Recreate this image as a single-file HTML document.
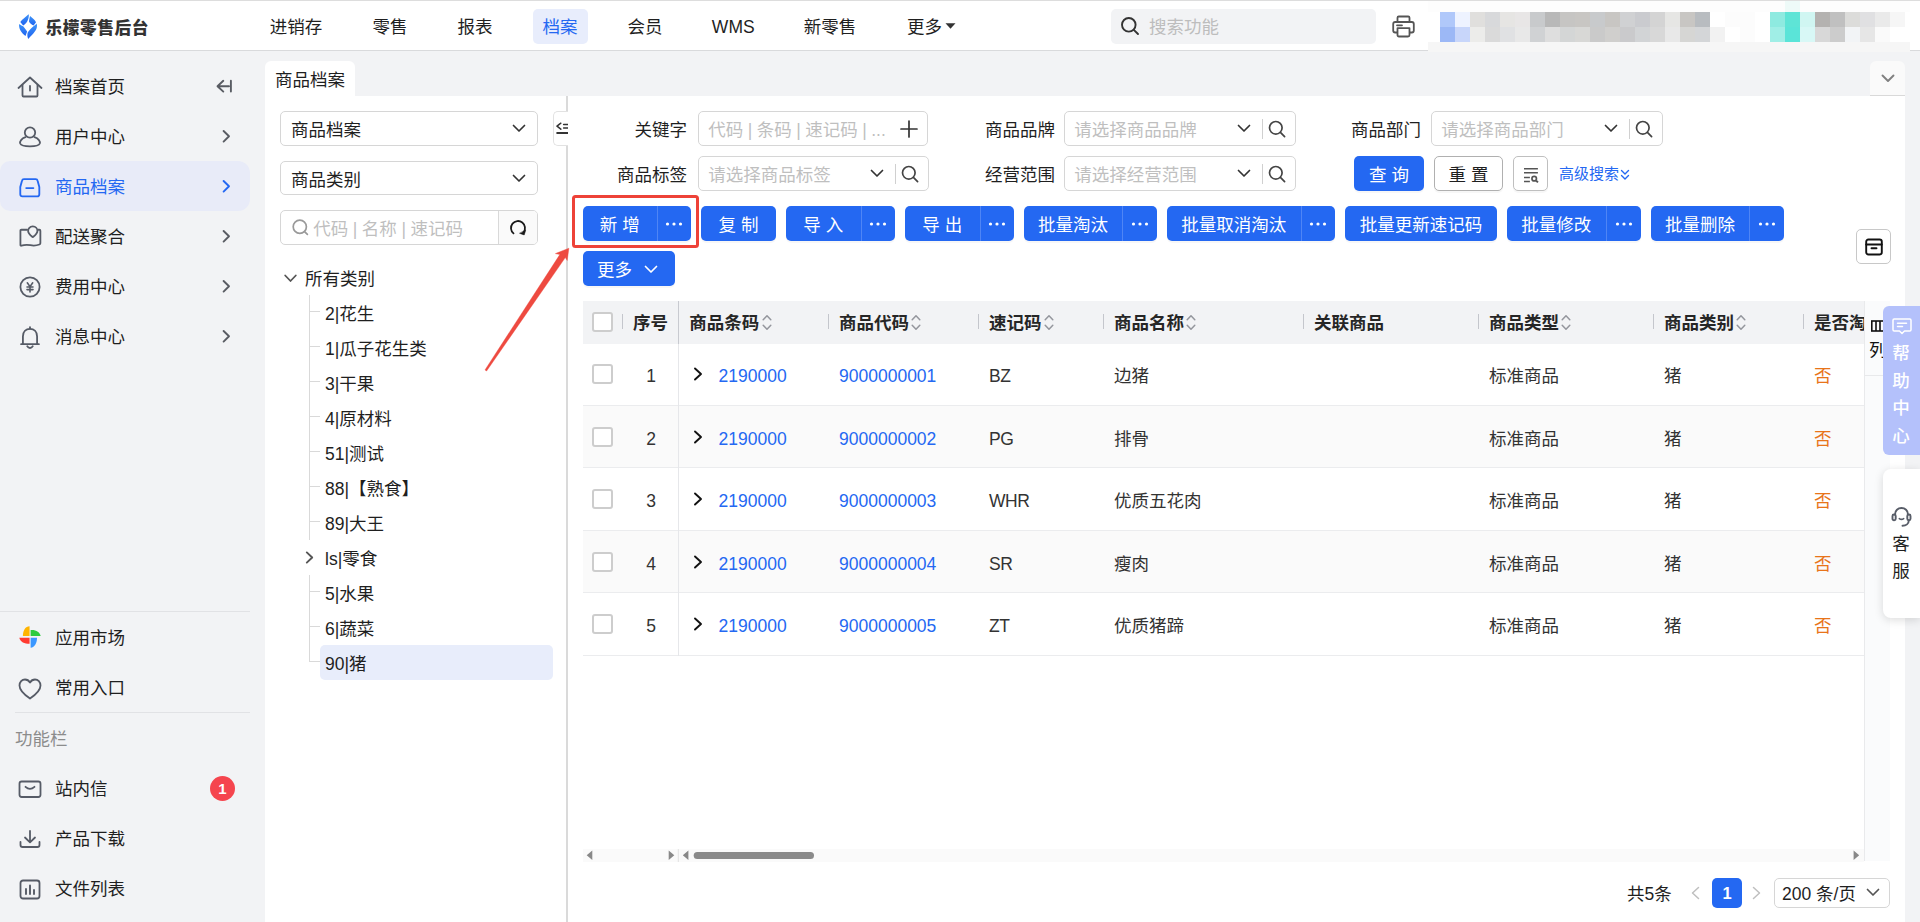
<!DOCTYPE html>
<html lang="zh-CN">
<head>
<meta charset="utf-8">
<title>乐檬零售后台 - 商品档案</title>
<style>
*{box-sizing:border-box;margin:0;padding:0}
html,body{width:1920px;height:922px;overflow:hidden}
body{position:relative;background:#f2f3f5;font-family:"Liberation Sans","Noto Sans CJK SC",sans-serif;font-size:17.5px;color:#1f1f1f;line-height:1}
svg{display:block;position:absolute;overflow:visible}
header,aside,main{display:block;position:static}
div,span,a{position:absolute;white-space:nowrap}
/* header */
#header{left:0;top:0;width:1920px;height:51px;background:#fff;border-top:1px solid #dddddd;border-bottom:1px solid #d9dadc}
#logo-text{left:45.5px;top:16px;height:20px;line-height:25.5px;font-size:16.7px;font-weight:900;color:#333;letter-spacing:0.55px}
.nav{top:9px;height:35px;line-height:37px;color:#1f1f1f;text-align:center}
.nav.on{background:#e8edfc;color:#2468f2;border-radius:5px}
#gsearch{left:1111px;top:9px;width:265px;height:35px;background:#f2f3f5;border-radius:5px}
#gsearch span{left:38px;top:0;line-height:36.5px;color:#bdbdbd}
.mz{width:15px;height:15px}
/* sidebar */
.mi{left:0;width:250px;height:50px;line-height:53px}
.mi .t{left:55px;top:0;color:#1f1f1f}
.mi.on{background:#e8ebf8;border-radius:10px 12px 12px 10px}
.mi.on .t{color:#2468f2}
.hr{height:1px;background:#e1e2e5}
/* main */
#tab{left:265px;top:61px;width:90px;height:36px;background:#fff;border-radius:6px 6px 0 0;line-height:39.5px;text-align:center}
#panel{left:265px;top:96px;width:1640px;height:826px;background:#fff}
.sel{height:34.5px;border:1px solid #d6d6d6;border-radius:5px;background:#fff;line-height:36.5px}
.sel .v{left:10px;top:0;color:#1f1f1f}
.sel .ph{left:9.3px;top:0;color:#bfbfbf}
.lbl{height:35px;line-height:39px;text-align:right;color:#1f1f1f}
.btn{height:35px;line-height:39px;background:#2468f2;color:#fff;border-radius:5px;text-align:center;box-shadow:0 2px 0 rgba(0,0,0,.03)}
.btn i{top:0;height:35px;width:1px;background:#4f85f5;position:absolute}
.btn b{top:0;left:0;height:35px;font-weight:400;text-align:center;position:absolute}
.tn{left:325px;height:35px;line-height:37px;color:#1f1f1f}
#thead{left:583px;top:301px;width:1281px;height:43px;background:#f2f3f5}
.th{top:301px;height:43px;line-height:44.5px;font-weight:700;color:#262626}
.tick{top:314px;width:1px;height:15px;background:#c4c6cc}
.row{left:583px;width:1281px;border-bottom:1px solid #ebecee;background:#fff}
.row.alt{background:#fafafa}
.td{color:#333;height:24px;line-height:28px}
.lk{color:#2468f2}
.cb{left:592px;width:20.6px;height:20px;border:2px solid #cdcdcd;border-radius:3px;background:#fff}
</style>
</head>
<body>
<!-- HEADER -->
<header>
<div id="header"></div>
<svg style="left:12px;top:8px" width="40" height="36" viewBox="0 0 1024 922">
<defs><linearGradient id="lg" x1="0" y1="0" x2="0" y2="1"><stop offset="0" stop-color="#3d93f8"/><stop offset="1" stop-color="#1f63f0"/></linearGradient></defs>
<path d="M425 158 C350 230 260 290 212 358 L285 447 C370 400 430 310 432 180 Z" fill="url(#lg)"/>
<path d="M462 208 C520 260 590 310 615 368 L552 450 C500 420 455 385 435 345 C440 290 455 240 462 208 Z" fill="url(#lg)"/>
<path d="M182 410 C165 520 240 640 345 718 C360 680 375 640 388 600 C350 550 310 500 285 468 C240 450 200 425 182 410 Z" fill="url(#lg)"/>
<path d="M632 400 C680 560 520 680 415 792 C385 720 390 660 405 620 C450 560 510 500 560 462 C590 440 615 420 632 400 Z" fill="url(#lg)"/>
</svg>
<div id="logo-text">乐檬零售后台</div>
<div class="nav" style="left:260px;width:72px">进销存</div>
<div class="nav" style="left:362.5px;width:55px">零售</div>
<div class="nav" style="left:447.5px;width:55px">报表</div>
<div class="nav on" style="left:532.5px;width:55px">档案</div>
<div class="nav" style="left:617.5px;width:55px">会员</div>
<div class="nav" style="left:702.5px;width:61.5px">WMS</div>
<div class="nav" style="left:794px;width:72px">新零售</div>
<div class="nav" style="left:897px;width:55px">更多</div>
<svg style="left:944.5px;top:23px" width="11" height="6" viewBox="0 0 11 6"><path d="M0.5 0.3 H10.5 L5.5 5.7 Z" fill="#333"/></svg>
<div id="gsearch"><svg style="left:9px;top:7px" width="20" height="20" viewBox="0 0 20 20"><circle cx="8.8" cy="8.8" r="6.8" fill="none" stroke="#333" stroke-width="1.9"/><path d="M13.8 13.8 L18 18" stroke="#333" stroke-width="1.9" stroke-linecap="round"/></svg><span>搜索功能</span></div>
<svg style="left:1392px;top:15px" width="23" height="23" viewBox="0 0 23 23" fill="none" stroke="#555" stroke-width="1.8" stroke-linejoin="round">
<path d="M5.5 7 V2.8 Q5.5 1.5 6.8 1.5 H16.2 Q17.5 1.5 17.5 2.8 V7"/>
<path d="M5.5 17.5 H3.2 Q1.2 17.5 1.2 15.5 V9 Q1.2 7 3.2 7 H19.8 Q21.8 7 21.8 9 V15.5 Q21.8 17.5 19.8 17.5 H17.5"/>
<path d="M5.5 13.2 H17.5 V20 Q17.5 21.5 16 21.5 H7 Q5.5 21.5 5.5 20 Z"/>
<path d="M5 10.3 H10" stroke-linecap="round"/>
</svg>
<div style="left:1428px;top:1px;width:482px;height:51px;background:#fdfdfd"></div>
<div class="mz" style="left:1785px;top:1px;height:11px;background:#eefaf8"></div>
<div style="left:1428px;top:12px;width:482px;height:30px;background:#fff"></div>
<div style="left:1428px;top:42px;width:482px;height:10px;background:#f6f6f6"></div>
<div class="mz" style="left:1440px;top:12px;background:#b0c8fa"></div><div class="mz" style="left:1440px;top:27px;background:#9cb8f6"></div><div class="mz" style="left:1455px;top:12px;background:#eef3ff"></div><div class="mz" style="left:1455px;top:27px;background:#c8d6fa"></div><div class="mz" style="left:1470px;top:12px;background:#e0dfdd"></div><div class="mz" style="left:1470px;top:27px;background:#ececea"></div><div class="mz" style="left:1485px;top:12px;background:#d8d9db"></div><div class="mz" style="left:1485px;top:27px;background:#dadada"></div><div class="mz" style="left:1500px;top:12px;background:#e6e5e3"></div><div class="mz" style="left:1500px;top:27px;background:#e0e1e3"></div><div class="mz" style="left:1515px;top:12px;background:#e8e6e6"></div><div class="mz" style="left:1515px;top:27px;background:#e8e8e8"></div><div class="mz" style="left:1530px;top:12px;background:#c8cacc"></div><div class="mz" style="left:1530px;top:27px;background:#d0d2d4"></div><div class="mz" style="left:1545px;top:12px;background:#b8b8b8"></div><div class="mz" style="left:1545px;top:27px;background:#dedede"></div><div class="mz" style="left:1560px;top:12px;background:#c6c5c3"></div><div class="mz" style="left:1560px;top:27px;background:#d4d6d6"></div><div class="mz" style="left:1575px;top:12px;background:#c8c6c3"></div><div class="mz" style="left:1575px;top:27px;background:#d8d8d6"></div><div class="mz" style="left:1590px;top:12px;background:#c8cacc"></div><div class="mz" style="left:1590px;top:27px;background:#cacaca"></div><div class="mz" style="left:1605px;top:12px;background:#c8c6c3"></div><div class="mz" style="left:1605px;top:27px;background:#d0cfcd"></div><div class="mz" style="left:1620px;top:12px;background:#d0d1d3"></div><div class="mz" style="left:1620px;top:27px;background:#cacacc"></div><div class="mz" style="left:1635px;top:12px;background:#cacbcf"></div><div class="mz" style="left:1635px;top:27px;background:#d2d4d6"></div><div class="mz" style="left:1650px;top:12px;background:#d4d4d4"></div><div class="mz" style="left:1650px;top:27px;background:#d8d8d8"></div><div class="mz" style="left:1665px;top:12px;background:#e6e6e4"></div><div class="mz" style="left:1665px;top:27px;background:#e8e8e8"></div><div class="mz" style="left:1680px;top:12px;background:#c8c6c3"></div><div class="mz" style="left:1680px;top:27px;background:#d6d6d4"></div><div class="mz" style="left:1695px;top:12px;background:#b8bcc0"></div><div class="mz" style="left:1695px;top:27px;background:#d4d6d8"></div><div class="mz" style="left:1710px;top:27px;background:#f2f2f2"></div><div class="mz" style="left:1725px;top:12px;background:#fcfcfc"></div><div class="mz" style="left:1740px;top:12px;background:#fcfcfc"></div><div class="mz" style="left:1740px;top:27px;background:#fcfcfc"></div><div class="mz" style="left:1770px;top:12px;background:#8eeae0"></div><div class="mz" style="left:1770px;top:27px;background:#a0eee6"></div><div class="mz" style="left:1785px;top:12px;background:#5ee4d6"></div><div class="mz" style="left:1785px;top:27px;background:#5ae4d8"></div><div class="mz" style="left:1800px;top:12px;background:#d0f6f2"></div><div class="mz" style="left:1800px;top:27px;background:#d8f8f6"></div><div class="mz" style="left:1815px;top:12px;background:#b4b2b0"></div><div class="mz" style="left:1815px;top:27px;background:#d8d8d8"></div><div class="mz" style="left:1830px;top:12px;background:#c0c0c0"></div><div class="mz" style="left:1830px;top:27px;background:#cccccc"></div><div class="mz" style="left:1845px;top:12px;background:#dcdcda"></div><div class="mz" style="left:1845px;top:27px;background:#f2f4f6"></div><div class="mz" style="left:1860px;top:12px;background:#e0e0e2"></div><div class="mz" style="left:1860px;top:27px;background:#e6e6e6"></div><div class="mz" style="left:1875px;top:12px;background:#eaeaea"></div><div class="mz" style="left:1875px;top:27px;background:#fafafa"></div><div class="mz" style="left:1890px;top:12px;background:#f6f6f6"></div>
</header>
<!-- SIDEBAR -->
<aside>
<div class="mi" style="top:61px"><svg style="left:17px;top:15.3px" width="26" height="24" viewBox="0 0 26 24" fill="none" stroke="#565b66" stroke-width="1.8" stroke-linecap="round" stroke-linejoin="round"><path d="M1.5 12 L13 1.5 L24.5 12"/><path d="M5.5 9 V19.5 Q5.5 20.5 6.5 20.5 H19.5 Q20.5 20.5 20.5 19.5 V9"/><path d="M13 10 V14.5"/></svg><span class="t">档案首页</span><svg style="left:216px;top:17px" width="18" height="16" viewBox="0 0 18 16" fill="none" stroke="#595c63" stroke-width="1.9" stroke-linecap="round" stroke-linejoin="round"><path d="M7.3 2.8 L1.5 8.2 L7.3 13.6 M2 8.2 H13 M14.9 2.8 V13.6"/></svg></div>
<div class="mi" style="top:111px"><svg style="left:18px;top:13.5px" width="24" height="24" viewBox="0 0 24 24" fill="none" stroke="#565b66" stroke-width="1.8" stroke-linecap="round" stroke-linejoin="round"><circle cx="12" cy="7.5" r="5.2"/><path d="M7.5 12.2 C3.5 13.5 1.5 16.5 2.2 18.5 C3 20.5 7 21.3 12 21.3 C17 21.3 21 20.5 21.8 18.5 C22.5 16.5 20.5 13.5 16.5 12.2"/></svg><span class="t">用户中心</span><svg style="left:221px;top:18px" width="10" height="15" viewBox="0 0 10 15" fill="none" stroke="#595c63" stroke-width="1.9" stroke-linecap="round" stroke-linejoin="round"><path d="M2.6 2 L8 7.3 L2.6 12.6"/></svg></div>
<div class="mi on" style="top:161px"><svg style="left:19.2px;top:16.5px" width="21.6" height="19.4" viewBox="0 0 24 21.6" fill="none" stroke="#2468f2" stroke-width="2.05" stroke-linecap="round" stroke-linejoin="round"><path d="M5.5 1.2 H18.5 Q20.3 1.2 20.7 3 L22.6 10 V18 Q22.6 20.4 20.2 20.4 H3.8 Q1.4 20.4 1.4 18 V10 L3.3 3 Q3.7 1.2 5.5 1.2 Z"/><path d="M8 11.2 H16"/></svg><span class="t">商品档案</span><svg style="left:221px;top:18px" width="10" height="15" viewBox="0 0 10 15" fill="none" stroke="#2468f2" stroke-width="1.9" stroke-linecap="round" stroke-linejoin="round"><path d="M2.6 2 L8 7.3 L2.6 12.6"/></svg></div>
<div class="mi" style="top:211px"><svg style="left:18.7px;top:14.1px" width="22.8" height="22.8" viewBox="0 0 24 24" fill="none" stroke="#565b66" stroke-width="1.9" stroke-linecap="round" stroke-linejoin="round"><path d="M8.5 5 H2.5 Q1.5 5 1.5 6 V21 Q1.5 22 2.5 21.8 Q7 20.3 12 21.3 Q17 22.3 21.5 20.5 Q22.5 20.2 22.5 19.2 V6 Q22.5 5 21.5 5 H20"/><path d="M14.5 1.5 C17.6 1.5 19.4 3.7 19.4 6.2 C19.4 9 16.4 11.2 14.5 12.8 C12.6 11.2 9.6 9 9.6 6.2 C9.6 3.7 11.4 1.5 14.5 1.5 Z"/></svg><span class="t">配送聚合</span><svg style="left:221px;top:18px" width="10" height="15" viewBox="0 0 10 15" fill="none" stroke="#595c63" stroke-width="1.9" stroke-linecap="round" stroke-linejoin="round"><path d="M2.6 2 L8 7.3 L2.6 12.6"/></svg></div>
<div class="mi" style="top:261px"><svg style="left:18px;top:13.8px" width="24" height="24" viewBox="0 0 24 24" fill="none" stroke="#565b66" stroke-width="1.8" stroke-linecap="round" stroke-linejoin="round"><circle cx="12" cy="12" r="9.6"/><path d="M9.3 7.8 L12 11.6 L14.7 7.8 M9 12 H15 M9 14.6 H15 M12 11.6 V17" stroke-width="1.6"/></svg><span class="t">费用中心</span><svg style="left:221px;top:18px" width="10" height="15" viewBox="0 0 10 15" fill="none" stroke="#595c63" stroke-width="1.9" stroke-linecap="round" stroke-linejoin="round"><path d="M2.6 2 L8 7.3 L2.6 12.6"/></svg></div>
<div class="mi" style="top:311px"><svg style="left:19.8px;top:14.6px" width="20" height="23.7" viewBox="0 0 22 26" fill="none" stroke="#565b66" stroke-width="2" stroke-linecap="round" stroke-linejoin="round"><path d="M11 1.2 V3"/><path d="M3.2 20 V11.5 C3.2 6.5 6.5 3.2 11 3.2 C15.5 3.2 18.8 6.5 18.8 11.5 V20"/><path d="M1.2 20 H20.8"/><path d="M8 22.3 C8.8 23.6 9.8 24.2 11 24.2 C12.2 24.2 13.2 23.6 14 22.3"/></svg><span class="t">消息中心</span><svg style="left:221px;top:18px" width="10" height="15" viewBox="0 0 10 15" fill="none" stroke="#595c63" stroke-width="1.9" stroke-linecap="round" stroke-linejoin="round"><path d="M2.6 2 L8 7.3 L2.6 12.6"/></svg></div>
<div class="hr" style="left:0;top:611px;width:250px"></div>
<div class="mi" style="top:612px"><svg style="left:10px;top:3.0px" width="60" height="95" viewBox="0 0 582 922">
<path d="M190 205 L190 110 C150 110 125 150 125 205 Z" fill="#ffb400"/>
<path d="M200 205 L200 145 C250 140 290 165 298 205 Z" fill="#2dcb3e"/>
<path d="M200 220 L262 220 C262 270 240 310 200 318 Z" fill="#3b97ff"/>
<path d="M190 220 L190 280 C140 280 100 260 90 220 Z" fill="#ff3a30"/>
</svg><span class="t">应用市场</span></div>
<div class="mi" style="top:662px"><svg style="left:18px;top:15.5px" width="24" height="22" viewBox="0 0 24 22" fill="none" stroke="#565b66" stroke-width="1.8" stroke-linecap="round" stroke-linejoin="round"><path d="M12 20.5 C6 16.5 1.5 12.5 1.5 7.5 C1.5 4 4 1.5 7 1.5 C9.2 1.5 11 2.8 12 4.5 C13 2.8 14.8 1.5 17 1.5 C20 1.5 22.5 4 22.5 7.5 C22.5 12.5 18 16.5 12 20.5 Z"/></svg><span class="t">常用入口</span></div>
<div class="hr" style="left:15px;top:712px;width:235px"></div>
<div style="left:15px;top:726px;height:24px;line-height:27px;color:#8c8c8c">功能栏</div>
<div class="mi" style="top:763px"><svg style="left:18px;top:16.5px" width="24" height="20" viewBox="0 0 24 20" fill="none" stroke="#565b66" stroke-width="1.8" stroke-linecap="round" stroke-linejoin="round"><rect x="1.5" y="1.5" width="21" height="15.5" rx="2.2"/><path d="M7.5 6.8 Q12 11 16.5 6.8"/></svg><span class="t">站内信</span><span style="left:210px;top:13px;width:25px;height:25px;line-height:25px;border-radius:50%;background:#f5454e;color:#fff;text-align:center;font-size:15px;font-weight:700">1</span></div>
<div class="mi" style="top:813px"><svg style="left:19px;top:14.5px" width="22" height="22" viewBox="0 0 22 22" fill="none" stroke="#565b66" stroke-width="1.8" stroke-linecap="round" stroke-linejoin="round"><path d="M11 3 V14 M6 9.5 L11 14.3 L16 9.5"/><path d="M1.5 14 V17 Q1.5 19 3.5 19 H18.5 Q20.5 19 20.5 17 V14"/></svg><span class="t">产品下载</span></div>
<div class="mi" style="top:863px"><svg style="left:19px;top:15.5px" width="22" height="22" viewBox="0 0 22 22" fill="none" stroke="#565b66" stroke-width="1.8" stroke-linecap="round" stroke-linejoin="round"><rect x="1.5" y="1.5" width="19" height="18" rx="2.5"/><path d="M7 10 V15 M11 6.5 V15 M15 11 V15" stroke-width="1.9"/></svg><span class="t">文件列表</span></div>
</aside>
<!-- MAIN -->
<main>
<div id="tab">商品档案</div>
<div id="panel"></div>
<div style="left:1870px;top:61px;width:35px;height:35px;background:#fafafa;border-radius:6px 6px 0 0;border-bottom:1px solid #d9d9d9"><svg style="left:11px;top:13px" width="14" height="9" viewBox="0 0 14 9" fill="none" stroke="#808080" stroke-width="1.9" stroke-linecap="round" stroke-linejoin="round"><path d="M1.5 1.5 L7 7 L12.5 1.5"/></svg></div>
<div class="sel" style="left:280px;top:111px;width:258px"><span class="v">商品档案</span><svg style="left:231px;top:12px" width="14" height="9" viewBox="0 0 14 9" fill="none" stroke="#333" stroke-width="1.7" stroke-linecap="round" stroke-linejoin="round"><path d="M1.5 1.5 L7 7 L12.5 1.5"/></svg></div>
<div class="sel" style="left:280px;top:161px;width:258px;height:34px;line-height:36px"><span class="v">商品类别</span><svg style="left:231px;top:12px" width="14" height="9" viewBox="0 0 14 9" fill="none" stroke="#333" stroke-width="1.7" stroke-linecap="round" stroke-linejoin="round"><path d="M1.5 1.5 L7 7 L12.5 1.5"/></svg></div>
<div class="sel" style="left:280px;top:210px;width:258px;overflow:hidden"><svg style="left:10.5px;top:7.5px" width="18" height="18" viewBox="0 0 18 18" fill="none" stroke="#9a9a9a" stroke-width="1.7" stroke-linecap="round"><circle cx="7.8" cy="7.8" r="6.6"/><path d="M12.8 12.8 L15.4 15.4"/></svg><span class="ph" style="left:32.3px;word-spacing:-0.35px">代码 | 名称 | 速记码</span><div style="left:217px;top:-1px;width:41px;height:35px;background:#fafafa;border-left:1px solid #d9d9d9"></div><svg style="left:228px;top:7.5px" width="18" height="18" viewBox="0 0 18 18" fill="none" stroke="#1a1a1a" stroke-width="1.8" stroke-linecap="round" stroke-linejoin="round"><path d="M4.5 14.4 A7 7 0 1 1 14.6 13.2"/><path d="M16.6 11.4 L15.2 15.9 L10.9 14.4 Z" fill="#1a1a1a" stroke-width="0.6"/></svg></div>
<svg style="left:283.5px;top:273.7px" width="13" height="9" viewBox="0 0 13 9" fill="none" stroke="#555" stroke-width="1.8" stroke-linecap="round" stroke-linejoin="round"><path d="M1.2 1.5 L6.5 7 L11.8 1.5"/></svg>
<div class="tn" style="left:305px;top:260.5px">所有类别</div>
<div style="left:309px;top:295px;width:1px;height:245px;background:#d9d9d9"></div><div style="left:309px;top:575px;width:1px;height:87px;background:#d9d9d9"></div>
<div style="left:310px;top:311px;width:10px;height:1px;background:#d9d9d9"></div><div class="tn" style="top:295.5px">2|花生</div>
<div style="left:310px;top:346px;width:10px;height:1px;background:#d9d9d9"></div><div class="tn" style="top:330.5px">1|瓜子花生类</div>
<div style="left:310px;top:381px;width:10px;height:1px;background:#d9d9d9"></div><div class="tn" style="top:365.5px">3|干果</div>
<div style="left:310px;top:416px;width:10px;height:1px;background:#d9d9d9"></div><div class="tn" style="top:400.5px">4|原材料</div>
<div style="left:310px;top:451px;width:10px;height:1px;background:#d9d9d9"></div><div class="tn" style="top:435.5px">51|测试</div>
<div style="left:310px;top:486px;width:10px;height:1px;background:#d9d9d9"></div><div class="tn" style="top:470.5px">88|【熟食】</div>
<div style="left:310px;top:521px;width:10px;height:1px;background:#d9d9d9"></div><div class="tn" style="top:505.5px">89|大王</div>
<svg style="left:305px;top:551px" width="9" height="13" viewBox="0 0 9 13" fill="none" stroke="#555" stroke-width="1.9" stroke-linecap="round" stroke-linejoin="round"><path d="M1.8 1.4 L7.2 6.5 L1.8 11.6"/></svg><div class="tn" style="top:540.5px">ls|零食</div>
<div style="left:310px;top:591px;width:10px;height:1px;background:#d9d9d9"></div><div class="tn" style="top:575.5px">5|水果</div>
<div style="left:310px;top:626px;width:10px;height:1px;background:#d9d9d9"></div><div class="tn" style="top:610.5px">6|蔬菜</div>
<div style="left:310px;top:661px;width:10px;height:1px;background:#d9d9d9"></div><div style="left:320px;top:645px;width:233px;height:34.5px;background:#e8edfb;border-radius:5px"></div><div class="tn" style="top:645.5px">90|猪</div>
<div style="left:566px;top:96px;width:2px;height:826px;background:#dadada"></div>
<div style="left:553px;top:111px;width:15px;height:34.5px;background:#fff;border:1px solid #e2e2e2;border-right:0;border-radius:5px 0 0 5px;overflow:hidden"><svg style="left:-1px;top:-1.6px" width="15" height="34" viewBox="553 111 15 34" fill="none" stroke="#333" stroke-width="1.5" stroke-linecap="round" stroke-linejoin="round"><path d="M560.8 124.2 L557 127.2 L560.8 130.2 M563.6 125.4 H570 M563.6 129 H570"/><path d="M557.2 134 H570" stroke-width="2"/></svg></div>
<div class="lbl" style="left:587px;top:111px;width:100px">关键字</div>
<div class="sel" style="left:698px;top:111px;width:230px"><span class="ph" style="word-spacing:-0.4px">代码 | 条码 | 速记码 | ...</span><svg style="left:201px;top:8px" width="18" height="18" viewBox="0 0 18 18" fill="none" stroke="#333" stroke-width="1.7" stroke-linecap="round"><path d="M9 1 V17 M1 9 H17"/></svg></div>
<div class="lbl" style="left:955px;top:111px;width:100px">商品品牌</div>
<div class="sel" style="left:1064px;top:111px;width:232px"><span class="ph">请选择商品品牌</span><svg style="left:172px;top:12px" width="14" height="9" viewBox="0 0 14 9" fill="none" stroke="#333" stroke-width="1.7" stroke-linecap="round" stroke-linejoin="round"><path d="M1.5 1.5 L7 7 L12.5 1.5"/></svg><i style="position:absolute;left:197px;top:7px;width:1px;height:20px;background:#d0d0d0"></i><svg style="left:203.3px;top:8px" width="18" height="18" viewBox="0 0 18 18" fill="none" stroke="#444" stroke-width="1.7" stroke-linecap="round"><circle cx="7.8" cy="7.8" r="6.3"/><path d="M12.4 12.4 L16.6 16.6"/></svg></div>
<div class="lbl" style="left:1321px;top:111px;width:100px">商品部门</div>
<div class="sel" style="left:1431px;top:111px;width:232px"><span class="ph">请选择商品部门</span><svg style="left:172px;top:12px" width="14" height="9" viewBox="0 0 14 9" fill="none" stroke="#333" stroke-width="1.7" stroke-linecap="round" stroke-linejoin="round"><path d="M1.5 1.5 L7 7 L12.5 1.5"/></svg><i style="position:absolute;left:197px;top:7px;width:1px;height:20px;background:#d0d0d0"></i><svg style="left:203.3px;top:8px" width="18" height="18" viewBox="0 0 18 18" fill="none" stroke="#444" stroke-width="1.7" stroke-linecap="round"><circle cx="7.8" cy="7.8" r="6.3"/><path d="M12.4 12.4 L16.6 16.6"/></svg></div>
<div class="lbl" style="left:587px;top:156px;width:100px">商品标签</div>
<div class="sel" style="left:698px;top:156px;width:231px"><span class="ph">请选择商品标签</span><svg style="left:171px;top:12px" width="14" height="9" viewBox="0 0 14 9" fill="none" stroke="#333" stroke-width="1.7" stroke-linecap="round" stroke-linejoin="round"><path d="M1.5 1.5 L7 7 L12.5 1.5"/></svg><i style="position:absolute;left:196px;top:7px;width:1px;height:20px;background:#d0d0d0"></i><svg style="left:202.3px;top:8px" width="18" height="18" viewBox="0 0 18 18" fill="none" stroke="#444" stroke-width="1.7" stroke-linecap="round"><circle cx="7.8" cy="7.8" r="6.3"/><path d="M12.4 12.4 L16.6 16.6"/></svg></div>
<div class="lbl" style="left:955px;top:156px;width:100px">经营范围</div>
<div class="sel" style="left:1064px;top:156px;width:232px"><span class="ph">请选择经营范围</span><svg style="left:172px;top:12px" width="14" height="9" viewBox="0 0 14 9" fill="none" stroke="#333" stroke-width="1.7" stroke-linecap="round" stroke-linejoin="round"><path d="M1.5 1.5 L7 7 L12.5 1.5"/></svg><i style="position:absolute;left:197px;top:7px;width:1px;height:20px;background:#d0d0d0"></i><svg style="left:203.3px;top:8px" width="18" height="18" viewBox="0 0 18 18" fill="none" stroke="#444" stroke-width="1.7" stroke-linecap="round"><circle cx="7.8" cy="7.8" r="6.3"/><path d="M12.4 12.4 L16.6 16.6"/></svg></div>
<div class="btn" style="left:1354px;top:156px;width:70px">查 询</div>
<div class="btn" style="left:1434px;top:156px;width:69px;background:#fff;color:#1f1f1f;border:1px solid #b0b0b0;line-height:37px">重 置</div>
<div class="btn" style="left:1513px;top:156px;width:35px;background:#fff;border:1px solid #bfbfbf"><svg style="left:9px;top:9px" width="16" height="16" viewBox="0 0 16 16" fill="none" stroke="#555" stroke-width="1.5" stroke-linecap="butt"><path d="M1 2.8 H14.9 M1 6.7 H14.9 M1 11.6 H6.9 M1 15.4 H6.9"/><circle cx="11.2" cy="12.7" r="2.25" stroke-width="1.7"/><path d="M13.2 14.7 L15 16.4" stroke-width="1.9"/></svg></div>
<div style="left:1559px;top:156px;height:35px;line-height:35px;font-size:15px;color:#2468f2">高级搜索</div><svg style="left:1620.2px;top:168.7px" width="10" height="12" viewBox="0 0 10 12" fill="none" stroke="#2468f2" stroke-width="1.4" stroke-linecap="round" stroke-linejoin="round"><path d="M1.5 1.5 L5 5 L8.5 1.5 M1.5 6.5 L5 10 L8.5 6.5"/></svg>
<div class="btn" style="left:583px;top:206px;width:108px"><b style="width:73.5px">新 增</b><i style="left:73.5px"></i><svg style="left:82.25px;top:15.5px" width="18" height="4" viewBox="0 0 18 4" fill="#fff"><circle cx="2.5" cy="2" r="1.6"/><circle cx="9" cy="2" r="1.6"/><circle cx="15.5" cy="2" r="1.6"/></svg></div>
<div class="btn" style="left:701px;top:206px;width:75px">复 制</div>
<div class="btn" style="left:786px;top:206px;width:109px"><b style="width:74.5px">导 入</b><i style="left:74.5px"></i><svg style="left:83.25px;top:15.5px" width="18" height="4" viewBox="0 0 18 4" fill="#fff"><circle cx="2.5" cy="2" r="1.6"/><circle cx="9" cy="2" r="1.6"/><circle cx="15.5" cy="2" r="1.6"/></svg></div>
<div class="btn" style="left:905px;top:206px;width:109px"><b style="width:74.5px">导 出</b><i style="left:74.5px"></i><svg style="left:83.25px;top:15.5px" width="18" height="4" viewBox="0 0 18 4" fill="#fff"><circle cx="2.5" cy="2" r="1.6"/><circle cx="9" cy="2" r="1.6"/><circle cx="15.5" cy="2" r="1.6"/></svg></div>
<div class="btn" style="left:1024px;top:206px;width:132.5px"><b style="width:98px">批量淘汰</b><i style="left:98px"></i><svg style="left:106.75px;top:15.5px" width="18" height="4" viewBox="0 0 18 4" fill="#fff"><circle cx="2.5" cy="2" r="1.6"/><circle cx="9" cy="2" r="1.6"/><circle cx="15.5" cy="2" r="1.6"/></svg></div>
<div class="btn" style="left:1167px;top:206px;width:167.5px"><b style="width:133.5px">批量取消淘汰</b><i style="left:133.5px"></i><svg style="left:142.0px;top:15.5px" width="18" height="4" viewBox="0 0 18 4" fill="#fff"><circle cx="2.5" cy="2" r="1.6"/><circle cx="9" cy="2" r="1.6"/><circle cx="15.5" cy="2" r="1.6"/></svg></div>
<div class="btn" style="left:1345px;top:206px;width:152px">批量更新速记码</div>
<div class="btn" style="left:1507px;top:206px;width:133.5px"><b style="width:98.5px">批量修改</b><i style="left:98.5px"></i><svg style="left:107.5px;top:15.5px" width="18" height="4" viewBox="0 0 18 4" fill="#fff"><circle cx="2.5" cy="2" r="1.6"/><circle cx="9" cy="2" r="1.6"/><circle cx="15.5" cy="2" r="1.6"/></svg></div>
<div class="btn" style="left:1651px;top:206px;width:132.5px"><b style="width:98px">批量删除</b><i style="left:98px"></i><svg style="left:106.75px;top:15.5px" width="18" height="4" viewBox="0 0 18 4" fill="#fff"><circle cx="2.5" cy="2" r="1.6"/><circle cx="9" cy="2" r="1.6"/><circle cx="15.5" cy="2" r="1.6"/></svg></div>
<div class="btn" style="left:583px;top:251px;width:92px"><b style="left:14px;width:35px">更多</b><svg style="left:61px;top:13.5px" width="14" height="9" viewBox="0 0 14 9" fill="none" stroke="#fff" stroke-width="1.7" stroke-linecap="round" stroke-linejoin="round"><path d="M1.5 1.5 L7 7 L12.5 1.5"/></svg></div>
<div style="left:572px;top:195px;width:127px;height:52.5px;border:3px solid #ee4238;border-radius:3.5px"></div>
<svg style="left:0;top:0" width="1920" height="922" viewBox="0 0 1920 922"><polygon points="485,369.9 559.8,254.6 555.4,253.6 568.9,248.2 567.2,260.5 565.3,257.6 486.6,371" fill="#ee4a40" stroke="#ee4a40" stroke-width="0.4" stroke-linejoin="round"/></svg>
<div style="left:1856px;top:229px;width:35px;height:35px;background:#fff;border:1px solid #c8c8c8;border-radius:5px"><svg style="left:8px;top:8px" width="18" height="18" viewBox="0 0 18 18" fill="none" stroke="#111" stroke-width="1.9" stroke-linejoin="round" stroke-linecap="round"><rect x="1.2" y="1.5" width="15.6" height="15" rx="2.2"/><path d="M1.2 6.5 H16.8 M6.5 10.3 H11.5"/></svg></div>
<div id="thead"></div>
<div class="cb" style="top:312px"></div><div class="tick" style="left:622px"></div><div class="th" style="left:633px">序号</div>
<div class="th" style="left:689.3px">商品条码</div><svg style="left:761.5px;top:313.5px" width="10" height="17" viewBox="0 0 10 17" fill="none" stroke="#94969d" stroke-width="1.5" stroke-linecap="round" stroke-linejoin="round"><path d="M1.2 5.8 L5 1.8 L8.8 5.8 M1.2 11.2 L5 15.2 L8.8 11.2"/></svg>
<div class="tick" style="left:828.25px"></div><div class="th" style="left:839.05px">商品代码</div><svg style="left:911.25px;top:313.5px" width="10" height="17" viewBox="0 0 10 17" fill="none" stroke="#94969d" stroke-width="1.5" stroke-linecap="round" stroke-linejoin="round"><path d="M1.2 5.8 L5 1.8 L8.8 5.8 M1.2 11.2 L5 15.2 L8.8 11.2"/></svg>
<div class="tick" style="left:978.25px"></div><div class="th" style="left:989.05px">速记码</div><svg style="left:1043.75px;top:313.5px" width="10" height="17" viewBox="0 0 10 17" fill="none" stroke="#94969d" stroke-width="1.5" stroke-linecap="round" stroke-linejoin="round"><path d="M1.2 5.8 L5 1.8 L8.8 5.8 M1.2 11.2 L5 15.2 L8.8 11.2"/></svg>
<div class="tick" style="left:1103.25px"></div><div class="th" style="left:1114.05px">商品名称</div><svg style="left:1186.25px;top:313.5px" width="10" height="17" viewBox="0 0 10 17" fill="none" stroke="#94969d" stroke-width="1.5" stroke-linecap="round" stroke-linejoin="round"><path d="M1.2 5.8 L5 1.8 L8.8 5.8 M1.2 11.2 L5 15.2 L8.8 11.2"/></svg>
<div class="tick" style="left:1303.25px"></div><div class="th" style="left:1314.05px">关联商品</div>
<div class="tick" style="left:1478.25px"></div><div class="th" style="left:1489.05px">商品类型</div><svg style="left:1561.25px;top:313.5px" width="10" height="17" viewBox="0 0 10 17" fill="none" stroke="#94969d" stroke-width="1.5" stroke-linecap="round" stroke-linejoin="round"><path d="M1.2 5.8 L5 1.8 L8.8 5.8 M1.2 11.2 L5 15.2 L8.8 11.2"/></svg>
<div class="tick" style="left:1653.25px"></div><div class="th" style="left:1664.05px">商品类别</div><svg style="left:1736.25px;top:313.5px" width="10" height="17" viewBox="0 0 10 17" fill="none" stroke="#94969d" stroke-width="1.5" stroke-linecap="round" stroke-linejoin="round"><path d="M1.2 5.8 L5 1.8 L8.8 5.8 M1.2 11.2 L5 15.2 L8.8 11.2"/></svg>
<div class="tick" style="left:1803.25px"></div><div class="th" style="left:1814.05px">是否淘</div>
<div class="row" style="top:344px;height:62px"></div><div class="cb" style="top:364.25px"></div><div class="td" style="left:623px;width:56px;text-align:center;top:362.25px">1</div><svg style="left:693px;top:367px" width="10" height="14" viewBox="0 0 10 14" fill="none" stroke="#111" stroke-width="1.9" stroke-linecap="round" stroke-linejoin="round"><path d="M2 1.5 L8 7 L2 12.5"/></svg><a class="td lk" style="left:718.6px;top:362.25px">2190000</a><a class="td lk" style="left:839px;top:362.25px">9000000001</a><div class="td" style="left:989px;top:362.25px;letter-spacing:-0.4px">BZ</div><div class="td" style="left:1114px;top:362.25px">边猪</div><div class="td" style="left:1489px;top:362.25px">标准商品</div><div class="td" style="left:1664px;top:362.25px">猪</div><div class="td" style="left:1814px;top:362.25px;color:#e8741a">否</div>
<div class="row alt" style="top:406px;height:62px"></div><div class="cb" style="top:426.75px"></div><div class="td" style="left:623px;width:56px;text-align:center;top:424.75px">2</div><svg style="left:693px;top:429.5px" width="10" height="14" viewBox="0 0 10 14" fill="none" stroke="#111" stroke-width="1.9" stroke-linecap="round" stroke-linejoin="round"><path d="M2 1.5 L8 7 L2 12.5"/></svg><a class="td lk" style="left:718.6px;top:424.75px">2190000</a><a class="td lk" style="left:839px;top:424.75px">9000000002</a><div class="td" style="left:989px;top:424.75px;letter-spacing:-0.4px">PG</div><div class="td" style="left:1114px;top:424.75px">排骨</div><div class="td" style="left:1489px;top:424.75px">标准商品</div><div class="td" style="left:1664px;top:424.75px">猪</div><div class="td" style="left:1814px;top:424.75px;color:#e8741a">否</div>
<div class="row" style="top:468px;height:63px"></div><div class="cb" style="top:489.25px"></div><div class="td" style="left:623px;width:56px;text-align:center;top:487.25px">3</div><svg style="left:693px;top:492px" width="10" height="14" viewBox="0 0 10 14" fill="none" stroke="#111" stroke-width="1.9" stroke-linecap="round" stroke-linejoin="round"><path d="M2 1.5 L8 7 L2 12.5"/></svg><a class="td lk" style="left:718.6px;top:487.25px">2190000</a><a class="td lk" style="left:839px;top:487.25px">9000000003</a><div class="td" style="left:989px;top:487.25px;letter-spacing:-0.4px">WHR</div><div class="td" style="left:1114px;top:487.25px">优质五花肉</div><div class="td" style="left:1489px;top:487.25px">标准商品</div><div class="td" style="left:1664px;top:487.25px">猪</div><div class="td" style="left:1814px;top:487.25px;color:#e8741a">否</div>
<div class="row alt" style="top:531px;height:62px"></div><div class="cb" style="top:551.75px"></div><div class="td" style="left:623px;width:56px;text-align:center;top:549.75px">4</div><svg style="left:693px;top:555px" width="10" height="14" viewBox="0 0 10 14" fill="none" stroke="#111" stroke-width="1.9" stroke-linecap="round" stroke-linejoin="round"><path d="M2 1.5 L8 7 L2 12.5"/></svg><a class="td lk" style="left:718.6px;top:549.75px">2190000</a><a class="td lk" style="left:839px;top:549.75px">9000000004</a><div class="td" style="left:989px;top:549.75px;letter-spacing:-0.4px">SR</div><div class="td" style="left:1114px;top:549.75px">瘦肉</div><div class="td" style="left:1489px;top:549.75px">标准商品</div><div class="td" style="left:1664px;top:549.75px">猪</div><div class="td" style="left:1814px;top:549.75px;color:#e8741a">否</div>
<div class="row" style="top:593px;height:63px"></div><div class="cb" style="top:614.25px"></div><div class="td" style="left:623px;width:56px;text-align:center;top:612.25px">5</div><svg style="left:693px;top:617px" width="10" height="14" viewBox="0 0 10 14" fill="none" stroke="#111" stroke-width="1.9" stroke-linecap="round" stroke-linejoin="round"><path d="M2 1.5 L8 7 L2 12.5"/></svg><a class="td lk" style="left:718.6px;top:612.25px">2190000</a><a class="td lk" style="left:839px;top:612.25px">9000000005</a><div class="td" style="left:989px;top:612.25px;letter-spacing:-0.4px">ZT</div><div class="td" style="left:1114px;top:612.25px">优质猪蹄</div><div class="td" style="left:1489px;top:612.25px">标准商品</div><div class="td" style="left:1664px;top:612.25px">猪</div><div class="td" style="left:1814px;top:612.25px;color:#e8741a">否</div>
<div style="left:678px;top:301px;width:1px;height:43px;background:#c8cad0"></div><div style="left:678px;top:344px;width:1px;height:312px;background:#e6e7ea"></div>
<div style="left:1864px;top:301px;width:26px;height:75px;background:#fafbfc;border-left:1px solid #e9eaec;border-bottom:1px solid #e8e9eb"></div><div style="left:1864px;top:376px;width:26px;height:485px;background:#fafbfc;border-left:1px solid #e9eaec"></div>
<svg style="left:1871px;top:320px" width="14" height="12" viewBox="0 0 14 12" fill="none" stroke="#111" stroke-width="1.6"><rect x="0.8" y="1" width="12.4" height="10"/><path d="M5 1 V11 M9 1 V11"/></svg><div style="left:1869px;top:338px;height:24px;line-height:24px;color:#111">列</div>
<div style="left:583px;top:849px;width:1281px;height:13px;background:#fafafa"></div>
<svg style="left:0;top:0" width="1920" height="922" viewBox="0 0 1920 922"><path d="M592.3 850.6 V860 L586.7 855.3 Z M668.7 850.6 V860 L674.3 855.3 Z M688.4 850.6 V860 L682.8 855.3 Z M1853.6 850.6 V860 L1859.2 855.3 Z" fill="#888"/><rect x="693.7" y="851.9" width="120.3" height="7" rx="3.5" fill="#8a8a8a"/><rect x="677.8" y="849" width="1" height="13" fill="#e2e2e2"/></svg>
<div style="left:1627px;top:878px;height:30px;line-height:32px;color:#1f1f1f">共5条</div>
<svg style="left:1691px;top:886px" width="9" height="14" viewBox="0 0 9 14" fill="none" stroke="#bfbfbf" stroke-width="1.5" stroke-linecap="round" stroke-linejoin="round"><path d="M7.5 1.5 L1.5 7 L7.5 12.5"/></svg>
<div style="left:1712px;top:878px;width:30px;height:30px;line-height:31.5px;background:#2468f2;color:#fff;border-radius:5px;text-align:center;font-weight:700;font-size:16.5px">1</div>
<svg style="left:1752px;top:886px" width="9" height="14" viewBox="0 0 9 14" fill="none" stroke="#bfbfbf" stroke-width="1.5" stroke-linecap="round" stroke-linejoin="round"><path d="M1.5 1.5 L7.5 7 L1.5 12.5"/></svg>
<div class="sel" style="left:1774px;top:878px;width:116px;height:30px;line-height:30px"><span class="v" style="left:7px">200 条/页</span><svg style="left:91px;top:9px" width="14" height="9" viewBox="0 0 14 9" fill="none" stroke="#555" stroke-width="1.7" stroke-linecap="round" stroke-linejoin="round"><path d="M1.5 1.5 L7 7 L12.5 1.5"/></svg></div>
<div style="left:1883px;top:306px;width:37px;height:149px;background:#b4c1fb;border-radius:6px 0 0 6px"></div>
<svg style="left:1892px;top:318px" width="20" height="18" viewBox="0 0 20 18" fill="none" stroke="#fff" stroke-width="1.5" stroke-linejoin="round" stroke-linecap="round"><path d="M2.2 1 H17.8 Q19 1 19 2.2 V11.8 Q19 13 17.8 13 H12.5 L10 15.5 L7.5 13 H2.2 Q1 13 1 11.8 V2.2 Q1 1 2.2 1 Z"/><path d="M5.5 5.2 H14.5 M5.5 8.5 H10.5"/></svg>
<div style="left:1891px;top:341.0px;width:20px;height:24px;line-height:24px;text-align:center;color:#fff;font-size:17.5px;font-weight:500">帮</div><div style="left:1891px;top:368.7px;width:20px;height:24px;line-height:24px;text-align:center;color:#fff;font-size:17.5px;font-weight:500">助</div><div style="left:1891px;top:396.4px;width:20px;height:24px;line-height:24px;text-align:center;color:#fff;font-size:17.5px;font-weight:500">中</div><div style="left:1891px;top:424.1px;width:20px;height:24px;line-height:24px;text-align:center;color:#fff;font-size:17.5px;font-weight:500">心</div>
<div style="left:1883px;top:469px;width:37px;height:149px;background:#fff;border-radius:8px 0 0 8px;box-shadow:0 2px 10px rgba(0,0,0,.14)"></div>
<svg style="left:1890.5px;top:505.5px" width="21" height="22" viewBox="0 0 21 22" fill="none" stroke="#585d68" stroke-width="1.9" stroke-linecap="round" stroke-linejoin="round"><path d="M4 8.5 C4 4.5 7 2 10.5 2 C14 2 17 4.5 17 8.5"/><rect x="1.5" y="8.5" width="3.2" height="5.8" rx="1.5"/><rect x="16.3" y="8.5" width="3.2" height="5.8" rx="1.5"/><path d="M17.8 14.3 C17.8 17.8 15 19.8 11.5 19.8"/><path d="M8.3 12.6 Q10.5 14.2 12.7 12.6" stroke-width="1.6"/></svg>
<div style="left:1891px;top:532px;width:20px;height:24px;line-height:25px;text-align:center;color:#1f1f1f">客</div><div style="left:1891px;top:559px;width:20px;height:24px;line-height:25px;text-align:center;color:#1f1f1f">服</div>
</main>
</body>
</html>
